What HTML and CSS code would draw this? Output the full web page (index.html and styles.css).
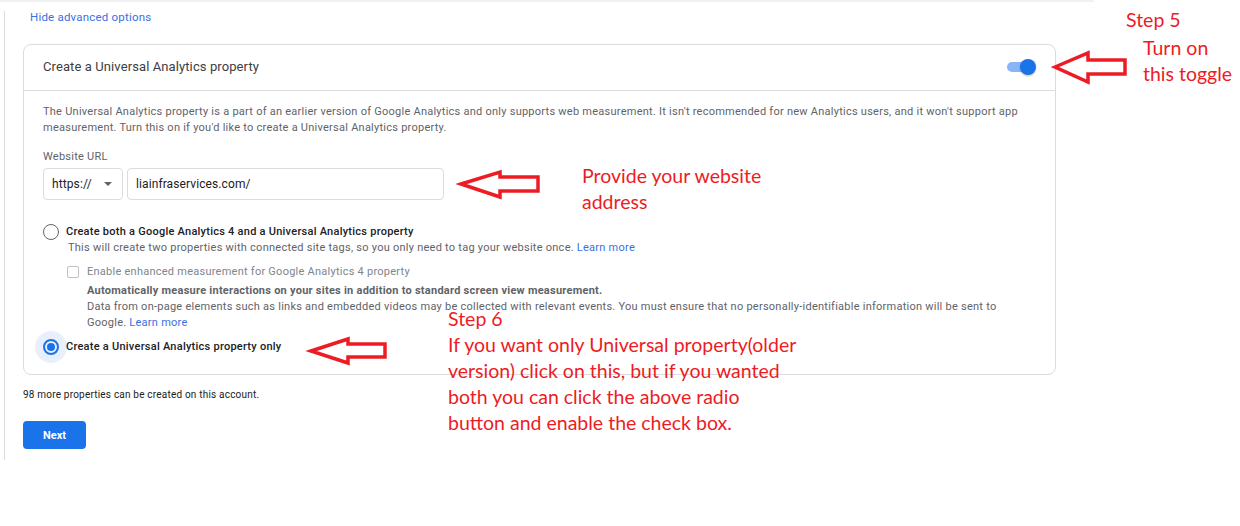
FILE: index.html
```html
<!DOCTYPE html>
<html lang="en">
<head>
    <meta charset="UTF-8">
    <title>Create property</title>
    <link rel="stylesheet" href="styles.css">
</head>
<body>
    <div class="page">
        <div class="panel">
            <a class="adv-link" href="#">Hide advanced options</a>

            <section class="ua-card">
                <header class="ua-head">
                    <h2>Create a Universal Analytics property</h2>
                    <span class="toggle"><span class="knob"></span></span>
                </header>
                <div class="ua-body">
                    <p class="desc">The Universal Analytics property is a part of an earlier version of Google Analytics and only supports web measurement. It isn't recommended for new Analytics users, and it won't support app measurement. Turn this on if you'd like to create a Universal Analytics property.</p>

                    <div class="field-label">Website URL</div>
                    <div class="url-row">
                        <div class="proto">https://<span class="caret"></span></div>
                        <div class="url-input">liainfraservices.com/</div>
                    </div>

                    <div class="option first">
                        <span class="radio"></span>
                        <div class="opt-text">
                            <div class="opt-title">Create both a Google Analytics 4 and a Universal Analytics property</div>
                            <div class="opt-sub">This will create two properties with connected site tags, so you only need to tag your website once. <a href="#">Learn more</a></div>
                            <div class="check-row">
                                <span class="checkbox"></span>
                                <div class="check-text">
                                    <div class="check-title">Enable enhanced measurement for Google Analytics 4 property</div>
                                    <div class="check-bold">Automatically measure interactions on your sites in addition to standard screen view measurement.</div>
                                    <div class="check-sub">Data from on-page elements such as links and embedded videos may be collected with relevant events. You must ensure that no personally-identifiable information will be sent to Google. <a href="#">Learn more</a></div>
                                </div>
                            </div>
                        </div>
                    </div>

                    <div class="option">
                        <span class="radio checked"><span class="dot"></span></span>
                        <div class="opt-text">
                            <div class="opt-title">Create a Universal Analytics property only</div>
                        </div>
                    </div>
                </div>
            </section>

            <p class="quota">98 more properties can be created on this account.</p>
            <button class="next">Next</button>
        </div>
    </div>

    <!-- red annotations drawn over the screenshot -->
    <svg class="arrows" width="1240" height="526" viewBox="0 0 1240 526">
        <polygon points="1055,67 1088,53 1088,60 1125,60 1125,74 1088,74 1088,82" />
        <polygon points="461,184 500,172 500,177 538,177 538,191 500,191 500,197" />
        <polygon points="311,351 348,339 348,344 385,344 385,357 348,357 348,363" />
    </svg>
    <div class="note step5">Step 5</div>
    <div class="note toggle-note">Turn on<br>this toggle</div>
    <div class="note url-note">Provide your website<br>address</div>
    <div class="note step6">Step 6<br>If you want only Universal property(older<br>version) click on this, but if you wanted<br>both you can click the above radio<br>button and enable the check box.</div>
</body>
</html>
```

FILE: styles.css
```css
* {
    margin: 0;
    padding: 0;
    box-sizing: border-box;
}

body {
    background: #fff;
    font-family: Roboto, "Liberation Sans", sans-serif;
    color: #202124;
    width: 1240px;
    height: 526px;
    overflow: hidden;
    position: relative;
}

.page {
    width: 1094px;
    border-top: 2px solid #f1f1f1;
}

.panel {
    margin-left: 4px;
    margin-top: 9px;
    height: 449px;
    border-left: 1px solid #dadce0;
    padding-left: 18px;
}

.adv-link {
    display: block;
    margin-left: 7px;
    font-size: 11.5px;
    line-height: 12px;
    letter-spacing: 0.2px;
    color: #3a6fe6;
    text-decoration: none;
}

.ua-card {
    margin-top: 21px;
    width: 1033px;
    border: 1px solid #dadce0;
    border-radius: 8px;
}

.ua-head {
    height: 46px;
    border-bottom: 1px solid #dadce0;
    display: flex;
    align-items: center;
    justify-content: space-between;
    padding: 0 19px 2px;
}

.ua-head h2 {
    font-size: 13px;
    font-weight: 400;
    letter-spacing: 0.1px;
    color: #3c4043;
}

.toggle {
    position: relative;
    width: 28px;
    height: 10px;
    border-radius: 5px;
    background: #8ab4f8;
    margin-right: 1px;
}

.knob {
    position: absolute;
    right: -1px;
    top: -3px;
    width: 16px;
    height: 16px;
    border-radius: 50%;
    background: #1a73e8;
    box-shadow: 0 1px 2px rgba(0, 0, 0, 0.25);
}

.ua-body {
    padding: 13px 19px 19px;
    font-size: 11px;
    line-height: 16px;
    letter-spacing: 0.25px;
    color: #5f6368;
}

.field-label {
    margin-top: 13px;
}

.url-row {
    display: flex;
    gap: 4px;
    margin-top: 3px;
}

.proto,
.url-input {
    height: 32px;
    border: 1px solid #dadce0;
    border-radius: 4px;
    display: flex;
    align-items: center;
    padding-left: 8px;
    font-size: 12px;
    letter-spacing: 0.1px;
    color: #202124;
}

.proto {
    width: 80px;
    position: relative;
}

.caret {
    position: absolute;
    left: 60px;
    top: 13px;
    border-left: 4px solid transparent;
    border-right: 4px solid transparent;
    border-top: 4px solid #5f6368;
}

.url-input {
    width: 317px;
}

.option {
    display: flex;
    gap: 7px;
}

.option.first {
    margin-top: 24px;
}

.radio {
    flex: none;
    width: 16px;
    height: 16px;
    border: 1.5px solid #5f6368;
    border-radius: 50%;
    position: relative;
}

.radio.checked {
    border: 2px solid #1a73e8;
    margin-top: 8px;
}

.radio.checked::before {
    content: "";
    position: absolute;
    left: -10px;
    top: -10px;
    width: 32px;
    height: 32px;
    border-radius: 50%;
    background: #e8f0fe;
    z-index: -1;
}

.dot {
    position: absolute;
    left: 2px;
    top: 2px;
    width: 8px;
    height: 8px;
    border-radius: 50%;
    background: #1a73e8;
}

.opt-title {
    color: #202124;
    font-weight: 500;
}

.option:not(.first) .opt-title {
    margin-top: 8px;
}

.opt-sub {
    margin-left: 2px;
}

.ua-body a {
    color: #3a6fe6;
    text-decoration: none;
}

.check-row {
    display: flex;
    gap: 8px;
    margin-top: 8px;
    margin-left: 1px;
}

.checkbox {
    flex: none;
    width: 12px;
    height: 12px;
    margin-top: 2px;
    border: 1.5px solid #bdc1c6;
    border-radius: 2px;
}

.check-title {
    color: #80868b;
}

.check-bold {
    margin-top: 3px;
    font-weight: 700;
}

.quota {
    margin-top: 13px;
    font-size: 10px;
    line-height: 14px;
    letter-spacing: 0.2px;
    color: #202124;
}

.next {
    margin-top: 19px;
    width: 63px;
    height: 28px;
    border: none;
    border-radius: 4px;
    background: #1a73e8;
    color: #fff;
    font-family: Roboto, "Liberation Sans", sans-serif;
    font-size: 11px;
    font-weight: 700;
}

.arrows {
    position: absolute;
    left: 0;
    top: 0;
    pointer-events: none;
}

.arrows polygon {
    fill: none;
    stroke: #ed1c24;
    stroke-width: 3.5;
}

.note {
    position: absolute;
    font-family: Lato, "Open Sans", sans-serif;
    font-size: 19.5px;
    line-height: 26px;
    color: #ed1c24;
    white-space: nowrap;
}

.step5 {
    left: 1126px;
    top: 7px;
}

.toggle-note {
    left: 1143px;
    top: 35px;
}

.url-note {
    left: 582px;
    top: 163px;
}

.step6 {
    left: 448px;
    top: 306px;
}
```
